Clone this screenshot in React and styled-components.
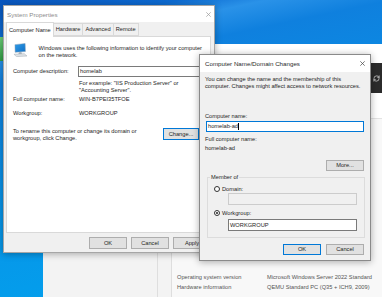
import React from "react";
import styled, { createGlobalStyle } from "styled-components";
import { RefreshCw } from "lucide-react";

const GlobalStyle = createGlobalStyle`
  html, body { margin: 0; padding: 0; }
  body { font-family: "Liberation Sans", Arial, sans-serif; }
  * { box-sizing: border-box; }
`;

const Desktop = styled.div`
  position: relative;
  width: 382px;
  height: 297px;
  overflow: hidden;
  background: linear-gradient(168deg, #0a56be 0%, #0d6bd2 10%, #2a92e8 15%, #0f80de 22%, #0894e8 55%, #00a4ee 100%);
  font-family: "Liberation Sans", Arial, sans-serif;
  font-size: 5.7px;
  line-height: 7px;
  color: #1e1e1e;
`;

const DesktopIcon = styled.div`
  position: absolute;
  left: 0;
  top: 37px;
  width: 3px;
  height: 24px;
  background: linear-gradient(180deg, #6fd07a, #2f9c43);
`;

/* settings window behind the dialogs */
const SettingsWindow = styled.div`
  position: absolute;
  left: 43px;
  top: 44px;
  right: 0;
  bottom: 0;
  display: grid;
  grid-template-columns: 115px 14px 1fr;
  background: #f8f8f8;
`;

const SettingsNav = styled.div`
  background: #f3f3f3;
  border-right: 1px solid #dedede;
`;

const SettingsMain = styled.div`
  display: flex;
  flex-direction: column;
  background: #f8f8f8;
`;

const SettingsHeader = styled.div`
  height: 75px;
  display: flex;
  justify-content: flex-end;
  align-items: flex-start;
  background: #fff;
  border-bottom: 1px solid #e3e3e3;
`;

const SyncTile = styled.div`
  width: 11px;
  height: 30px;
  margin-top: 19px;
  background: #2b2b2b;
  display: flex;
  align-items: center;
  justify-content: center;
  color: #fff;
`;

const InfoGrid = styled.div`
  margin-top: auto;
  padding: 0 0 5px 5px;
  display: grid;
  grid-template-columns: 90px 1fr;
  line-height: 10px;
  color: #555;
  white-space: nowrap;
`;

/* dialog parts */
const Window = styled.div`
  position: absolute;
  left: ${(p) => p.$left}px;
  top: ${(p) => p.$top}px;
  width: ${(p) => p.$width}px;
  height: ${(p) => p.$height}px;
  display: flex;
  flex-direction: column;
  background: #f0f0f0;
  border: 1px solid ${(p) => (p.$active ? "#8a8a8a" : "#a6a6a6")};
  box-shadow: 0 1px 7px rgba(0, 0, 0, 0.32);
`;

const TitleBar = styled.div`
  flex: none;
  height: ${(p) => p.$h}px;
  display: flex;
  align-items: center;
  justify-content: space-between;
  padding: 0 ${(p) => p.$pr}px 0 ${(p) => p.$pl}px;
  background: #fff;
`;

const Title = styled.span`
  font-size: 6.2px;
  color: ${(p) => (p.$active ? "#2a2a2a" : "#8c8c8c")};
  white-space: nowrap;
`;

const CloseIcon = ({ color }) => (
  <svg width="5" height="5" viewBox="0 0 5 5">
    <path d="M0.3 0.3 L4.7 4.7 M4.7 0.3 L0.3 4.7" stroke={color} strokeWidth="0.7" />
  </svg>
);

const Body = styled.div`
  flex: 1;
  display: flex;
  flex-direction: column;
  padding: ${(p) => p.$pad};
`;

const TabRow = styled.div`
  height: 14px;
  display: flex;
  align-items: flex-end;
  position: relative;
  z-index: 1;
`;

const Tab = styled.div`
  height: ${(p) => (p.$active ? 15 : 13)}px;
  margin-bottom: ${(p) => (p.$active ? -1 : 0)}px;
  margin-left: -1px;
  padding: 0 2px;
  display: flex;
  align-items: center;
  border: 1px solid #d9d9d9;
  border-bottom: ${(p) => (p.$active ? "none" : "1px solid #d9d9d9")};
  background: ${(p) => (p.$active ? "#fff" : "#f0f0f0")};
  white-space: nowrap;
  &:first-child {
    margin-left: 0;
  }
`;

const TabPanel = styled.div`
  flex: 1;
  display: flex;
  flex-direction: column;
  padding: 6px 8px 0 6px;
  background: #fff;
  border: 1px solid #d9d9d9;
`;

const IntroRow = styled.div`
  display: flex;
  align-items: flex-start;
  gap: 11px;
`;

const Lines = styled.div`
  white-space: nowrap;
  padding-top: ${(p) => p.$pt || 0}px;
  margin-top: ${(p) => p.$mt || 0}px;
  padding-left: ${(p) => p.$pl || 0}px;
`;

const FieldRow = styled.div`
  display: grid;
  grid-template-columns: 66px 1fr;
  align-items: center;
  margin-top: ${(p) => p.$mt}px;
  white-space: nowrap;
`;

const TextBox = styled.div`
  height: ${(p) => p.$h}px;
  margin: ${(p) => p.$m || 0};
  display: flex;
  align-items: center;
  padding: 0 1px;
  white-space: nowrap;
  border: 1px solid
    ${(p) => (p.$focused ? "#0078d7" : p.$disabled ? "#cccccc" : "#7a7a7a")};
  background: ${(p) => (p.$disabled ? "#f0f0f0" : "#fff")};
`;

const Caret = styled.span`
  display: inline-block;
  width: 0.6px;
  height: 7px;
  background: #000;
`;

const RenameRow = styled.div`
  display: flex;
  justify-content: space-between;
  align-items: flex-start;
  margin-top: 11px;
  padding-right: 3px;
`;

const ButtonRow = styled.div`
  display: flex;
  justify-content: flex-end;
  gap: ${(p) => p.$gap}px;
  margin-top: ${(p) => p.$mt}px;
`;

const Button = styled.div`
  width: ${(p) => p.$w || 38}px;
  height: ${(p) => p.$h || 12}px;
  margin-top: ${(p) => p.$mt || 0}px;
  display: flex;
  align-items: center;
  justify-content: center;
  background: #e1e1e1;
  border: 1px solid ${(p) => (p.$focused ? "#0078d7" : "#adadad")};
  white-space: nowrap;
`;

const Label = styled.div`
  margin-top: ${(p) => p.$mt || 0}px;
  white-space: nowrap;
`;

const GroupBox = styled.fieldset`
  margin: 2.5px -1px 0 2px;
  padding: 5px 7px 6px 6px;
  border: 1px solid #dcdcdc;
  min-width: 0;
`;

const Legend = styled.legend`
  padding: 0 1px;
  margin-left: -4px;
  line-height: 7px;
`;

const RadioRow = styled.div`
  display: flex;
  align-items: center;
  gap: 2px;
  margin-top: ${(p) => p.$mt || 0}px;
`;

const Radio = styled.span`
  width: 6px;
  height: 6px;
  border-radius: 50%;
  border: 0.8px solid #333;
  background: #fff;
  display: inline-flex;
  align-items: center;
  justify-content: center;
  &::after {
    content: "";
    width: 2.6px;
    height: 2.6px;
    border-radius: 50%;
    background: ${(p) => (p.$checked ? "#222" : "transparent")};
  }
`;

const ComputerIcon = () => (
  <svg width="15" height="14" viewBox="0 0 15 14">
    <defs>
      <linearGradient id="scr" x1="0" y1="0" x2="1" y2="1">
        <stop offset="0" stopColor="#2f9be6" />
        <stop offset="1" stopColor="#0f6fc6" />
      </linearGradient>
    </defs>
    <polygon points="2,1.5 12.5,0.3 12.8,8.6 2.2,9.4" fill="url(#scr)" stroke="#8aa0b4" strokeWidth="0.5" />
    <polygon points="6,9.2 8.6,9 9.2,11 5.6,11.2" fill="#a9b2ba" />
    <polygon points="1,11.4 11.6,10.8 14.4,13.2 3.6,13.8" fill="#dfe3e7" stroke="#9ba5ae" strokeWidth="0.5" />
  </svg>
);

const SystemProperties = () => (
  <Window $left={3} $top={5} $width={212} $height={248}>
    <TitleBar $h={16} $pl={3} $pr={3}>
      <Title>System Properties</Title>
      <CloseIcon color="#9a9a9a" />
    </TitleBar>
    <Body $pad="0 3px 3px 2px">
      <TabRow>
        <Tab $active>Computer Name</Tab>
        <Tab>Hardware</Tab>
        <Tab>Advanced</Tab>
        <Tab>Remote</Tab>
      </TabRow>
      <TabPanel>
        <IntroRow>
          <ComputerIcon />
          <Lines $pt={1.5}>
            Windows uses the following information to identify your computer
            <br />
            on the network.
          </Lines>
        </IntroRow>
        <FieldRow $mt={7.5}>
          <span>Computer description:</span>
          <TextBox $h={11} $m="0 0 0 -1px">homelab</TextBox>
        </FieldRow>
        <Lines $mt={2.5} $pl={66}>
          For example: "IIS Production Server" or
          <br />
          "Accounting Server".
        </Lines>
        <FieldRow $mt={2}>
          <span>Full computer name:</span>
          <span>WIN-B7PEI35TFOE</span>
        </FieldRow>
        <FieldRow $mt={7}>
          <span>Workgroup:</span>
          <span>WORKGROUP</span>
        </FieldRow>
        <RenameRow>
          <Lines>
            To rename this computer or change its domain or
            <br />
            workgroup, click Change.
          </Lines>
          <Button $w={36} $mt={0.5} $focused>
            Change...
          </Button>
        </RenameRow>
      </TabPanel>
      <ButtonRow $gap={4} $mt={4}>
        <Button>OK</Button>
        <Button>Cancel</Button>
        <Button>Apply</Button>
      </ButtonRow>
    </Body>
  </Window>
);

const DomainChanges = () => (
  <Window $left={199} $top={54} $width={172} $height={207} $active>
    <TitleBar $h={17} $pl={5} $pr={5}>
      <Title $active>Computer Name/Domain Changes</Title>
      <CloseIcon color="#444" />
    </TitleBar>
    <Body $pad="3.5px 6px 5px 5px">
      <Lines>
        You can change the name and the membership of this
        <br />
        computer. Changes might affect access to network resources.
      </Lines>
      <Label $mt={23}>Computer name:</Label>
      <TextBox $h={11} $m="1.5px 0 0 1px" $focused>
        homelab-ad
        <Caret />
      </TextBox>
      <Label $mt={3.5}>Full computer name:</Label>
      <Label $mt={2}>homelab-ad</Label>
      <ButtonRow $gap={0} $mt={8.5}>
        <Button $h={11}>More...</Button>
      </ButtonRow>
      <GroupBox>
        <Legend>Member of</Legend>
        <RadioRow>
          <Radio />
          <span>Domain:</span>
        </RadioRow>
        <TextBox $h={12} $m="0.5px 0 0 14px" $disabled />
        <RadioRow $mt={4.5}>
          <Radio $checked />
          <span>Workgroup:</span>
        </RadioRow>
        <TextBox $h={12} $m="2.5px 0 0 14px">WORKGROUP</TextBox>
      </GroupBox>
      <ButtonRow $gap={5} $mt={6}>
        <Button $h={11} $focused>
          OK
        </Button>
        <Button $h={11}>Cancel</Button>
      </ButtonRow>
    </Body>
  </Window>
);

const Settings = () => (
  <SettingsWindow>
    <SettingsNav />
    <SettingsNav />
    <SettingsMain>
      <SettingsHeader>
        <SyncTile>
          <RefreshCw size={7} strokeWidth={2} />
        </SyncTile>
      </SettingsHeader>
      <InfoGrid>
        <span>Operating system version</span>
        <span>Microsoft Windows Server 2022 Standard</span>
        <span>Hardware information</span>
        <span>QEMU Standard PC (Q35 + ICH9, 2009)</span>
      </InfoGrid>
    </SettingsMain>
  </SettingsWindow>
);

export default function App() {
  return (
    <>
      <GlobalStyle />
      <Desktop>
        <DesktopIcon />
        <Settings />
        <SystemProperties />
        <DomainChanges />
      </Desktop>
    </>
  );
}
